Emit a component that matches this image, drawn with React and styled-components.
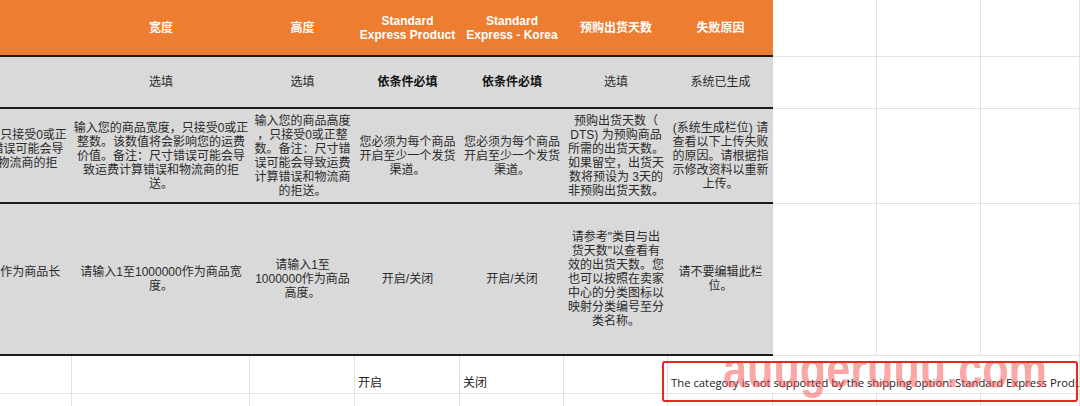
import React from 'react'
import styled, { createGlobalStyle, css } from 'styled-components'

const GlobalStyle = createGlobalStyle`
    html, body {
        margin: 0;
        padding: 0;
        background: #fff;
    }
    body {
        font-family: "Liberation Sans", "Noto Sans CJK SC", sans-serif;
    }
`

const COLUMNS = '72px 178px 105px 105px 104px 104px 105px 104px 104px 1fr'

const header = [
    ['宽度'],
    ['高度'],
    ['Standard', 'Express Product'],
    ['Standard', 'Express - Korea'],
    ['预购出货天数'],
    ['失败原因'],
]

const required = [
    { lines: ['选填'] },
    { lines: ['选填'] },
    { lines: ['依条件必填'], bold: true },
    { lines: ['依条件必填'], bold: true },
    { lines: ['选填'] },
    { lines: ['系统已生成'] },
]

const notes = [
    ['输入您的商品宽度，只接受0或正', '整数。该数值将会影响您的运费', '价值。备注：尺寸错误可能会导', '致运费计算错误和物流商的拒', '送。'],
    ['输入您的商品高度', '，只接受0或正整', '数。备注：尺寸错', '误可能会导致运费', '计算错误和物流商', '的拒送。'],
    ['您必须为每个商品', '开启至少一个发货', '渠道。'],
    ['您必须为每个商品', '开启至少一个发货', '渠道。'],
    ['预购出货天数（', 'DTS) 为预购商品', '所需的出货天数。', '如果留空，出货天', '数将预设为 3天的', '非预购出货天数。'],
    ['(系统生成栏位) 请', '查看以下上传失败', '的原因。请根据指', '示修改资料以重新', '上传。'],
]

const rules = [
    ['请输入1至1000000作为商品宽', '度。'],
    ['请输入1至', '1000000作为商品', '高度。'],
    ['开启/关闭'],
    ['开启/关闭'],
    ['请参考"类目与出', '货天数"以查看有', '效的出货天数。您', '也可以按照在卖家', '中心的分类图标以', '映射分类编号至分', '类名称。'],
    ['请不要编辑此栏', '位。'],
]

const Lines = ({ lines }) => lines.map((l, i) => (
    <React.Fragment key={i}>
        {i > 0 && <br />}
        {l}
    </React.Fragment>
))

const Blank = ({ count }) => Array.from({ length: count }).map((_, i) => (
    <Cell key={i} />
))

export default function App() {
    return (
        <>
            <GlobalStyle />
            <Sheet>
                <Row $h={57}>
                    <Cell $tone="head" />
                    {header.map((h, i) => (
                        <Cell key={i} $tone="head"><Text $bold><Lines lines={h} /></Text></Cell>
                    ))}
                    <Blank count={3} />
                </Row>

                <Row $h={52}>
                    <Cell $tone="band" />
                    {required.map((r, i) => (
                        <Cell key={i} $tone="band"><Text $bold={r.bold} $dark={r.bold}><Lines lines={r.lines} /></Text></Cell>
                    ))}
                    <Blank count={3} />
                </Row>

                <Row $h={95}>
                    <Cell $tone="band">
                        <Lead>
                            <Lines lines={['输入您的商品长度，只接受0或正', '价值。备注：尺寸错误可能会导', '致运费计算错误和物流商的拒', '送。']} />
                        </Lead>
                    </Cell>
                    {notes.map((n, i) => (
                        <Cell key={i} $tone="band"><Text><Lines lines={n} /></Text></Cell>
                    ))}
                    <Blank count={3} />
                </Row>

                <Row $h={152}>
                    <Cell $tone="band">
                        <Lead>
                            <Lines lines={['请输入1至1000000作为商品长', '度。']} />
                        </Lead>
                    </Cell>
                    {rules.map((r, i) => (
                        <Cell key={i} $tone="band"><Text><Lines lines={r} /></Text></Cell>
                    ))}
                    <Blank count={3} />
                </Row>

                <Row $h={38}>
                    <Blank count={3} />
                    <Cell $entry>开启</Cell>
                    <Cell $entry>关闭</Cell>
                    <Cell />
                    <Cell $entry $open>
                        <Message>The category is not supported by the shipping option: Standard Express Product</Message>
                    </Cell>
                    <Cell $open />
                    <Cell $open />
                    <Cell />
                </Row>

                <Row $h={20}>
                    <Blank count={10} />
                </Row>

                <Callout>
                    <Watermark>auugeruuu.com</Watermark>
                </Callout>
            </Sheet>
        </>
    )
}

const Sheet = styled.div`
    position: relative;
    width: 1080px;
    height: 406px;
    overflow: hidden;
    background: #fff;
`

const Row = styled.div`
    display: grid;
    grid-template-columns: ${COLUMNS};
    height: ${p => p.$h}px;
`

const Cell = styled.div`
    box-sizing: border-box;
    display: flex;
    align-items: center;
    justify-content: center;
    min-width: 0;
    overflow: hidden;
    font-size: 12px;
    line-height: 14px;
    color: #2b2b2b;
    border-bottom: 1px solid #e2e2e2;
    border-right: ${p => p.$open ? 'none' : '1px solid #e2e2e2'};

    ${p => p.$tone === 'head' && css`
        background: #ed7d31;
        color: #fff;
        border-right: none;
        border-bottom: 2px solid #1c1c1c;
    `}

    ${p => p.$tone === 'band' && css`
        background: #d9d9d9;
        border-right: none;
        border-bottom: 2px solid #1c1c1c;
    `}

    ${p => p.$entry && css`
        align-items: flex-end;
        justify-content: flex-start;
        padding: 0 0 3px 3px;
        overflow: visible;
        color: #222;
    `}
`

const Text = styled.div`
    text-align: center;
    white-space: nowrap;
    font-weight: ${p => p.$bold ? 700 : 400};
    ${p => p.$dark && css`color: #111;`}
`

const Lead = styled.div`
    flex: none;
    width: 200px;
    margin-left: -113px;
    text-align: center;
    white-space: nowrap;
`

const Message = styled.span`
    white-space: nowrap;
    font-family: "Open Sans", "Liberation Sans", sans-serif;
    font-size: 11.3px;
    line-height: 13px;
    color: #222;
    padding-bottom: 1px;
`

const Callout = styled.div`
    position: absolute;
    left: 662px;
    top: 361px;
    width: 416px;
    height: 41px;
    box-sizing: border-box;
    border: 2px solid #e4271f;
    border-radius: 3px;
    overflow: hidden;
    pointer-events: none;
`

const Watermark = styled.div`
    position: absolute;
    left: 59px;
    top: -22px;
    font-family: "Liberation Sans", Arial, sans-serif;
    font-weight: 700;
    font-size: 54px;
    line-height: 54px;
    white-space: nowrap;
    color: rgba(248, 80, 80, 0.5);
    transform: scaleX(0.8);
    transform-origin: left top;
`
